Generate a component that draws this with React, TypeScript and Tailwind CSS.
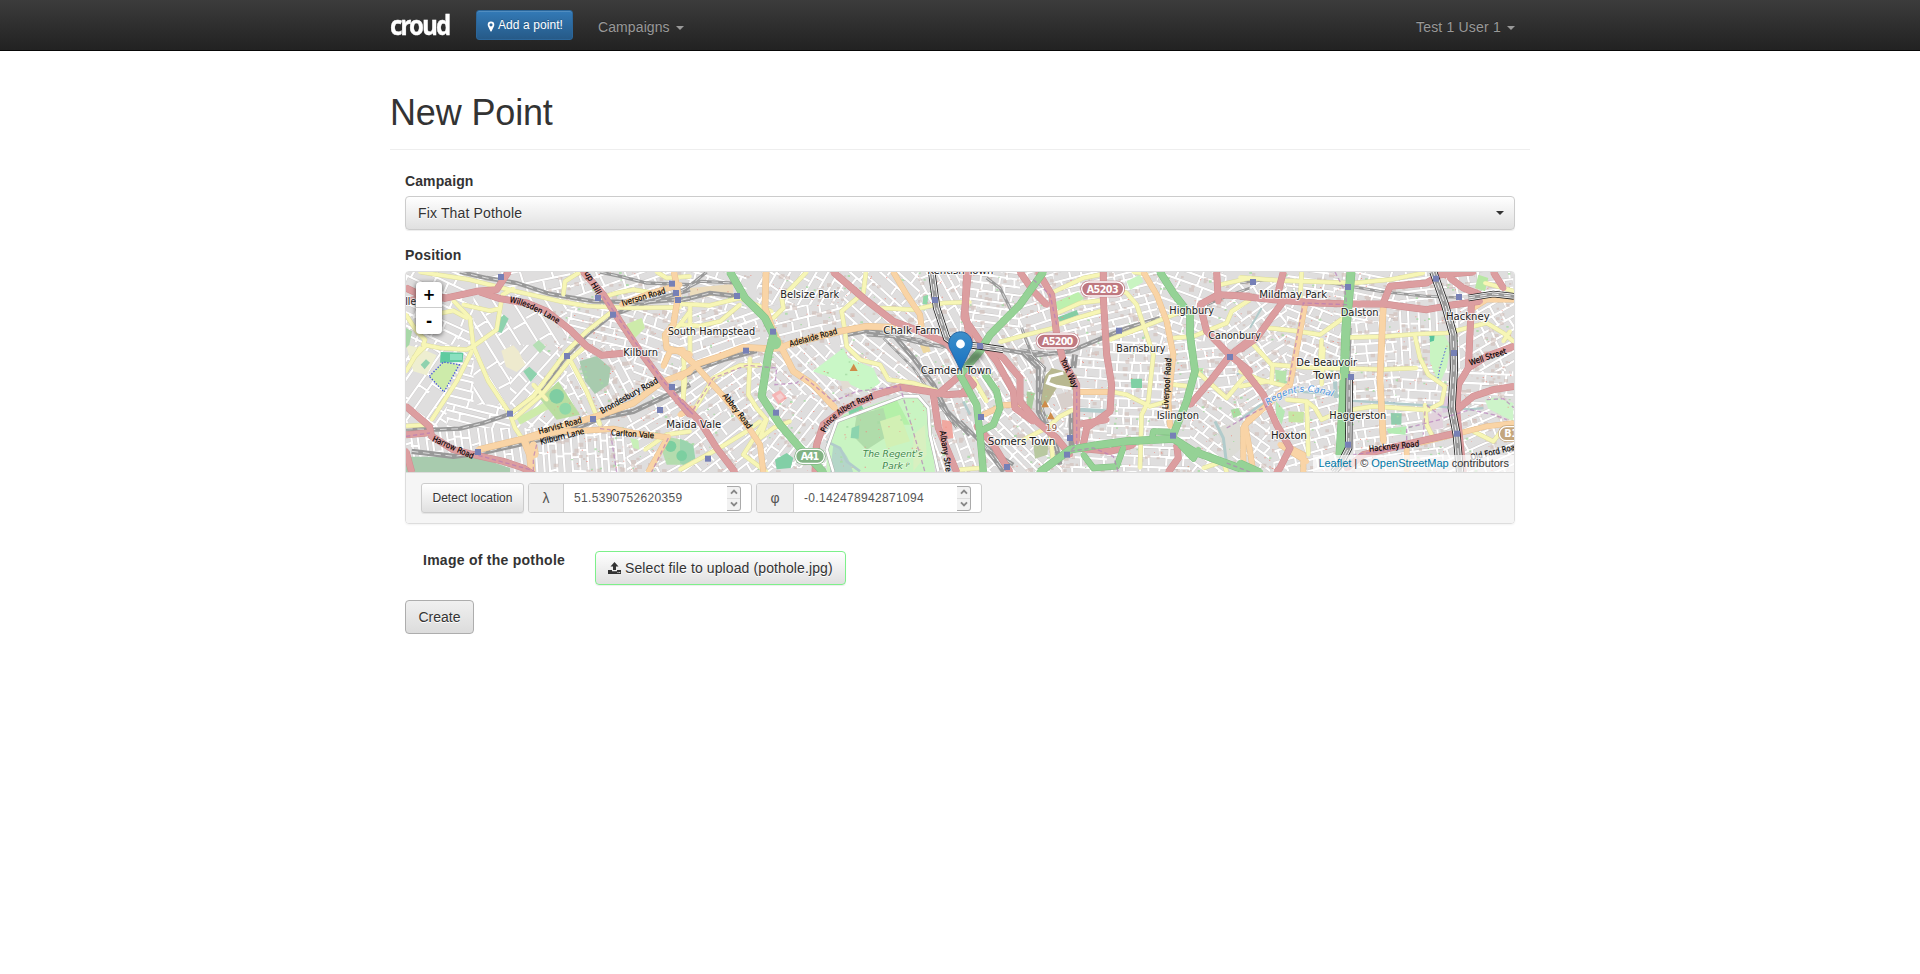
import React from "react";

type Road = [tile: number, d: string, width?: number];

const TILE = 840;
const shift = (tile: number) => `translate(${tile * TILE} 0)`;

/* ---------- minor streets ---------- */

function makeRandom(seed: number) {
  let s = seed;
  return () => {
    s = (s * 1664525 + 1013904223) % 4294967296;
    return s / 4294967296;
  };
}

// x, y, width, height, angle, row spacing, cross-street spacing
const zones: number[][] = [
  [0, 0, 240, 230, 25, 34, 60],
  [0, 230, 230, 270, -55, 40, 80],
  [140, 270, 200, 220, 14, 25, 74],
  [220, 0, 300, 110, -12, 36, 66],
  [220, 80, 300, 330, 58, 42, 100],
  [510, 0, 330, 120, -20, 32, 60],
  [500, 120, 220, 130, 14, 23, 56],
  [330, 230, 300, 260, -48, 33, 70],
  [500, 240, 320, 200, 62, 26, 58],
  [0, 480, 390, 140, 82, 22, 60],
  [390, 480, 290, 140, 86, 21, 56],
  [680, 380, 200, 240, -30, 28, 60],
  [700, 120, 150, 260, 20, 27, 60],
  [840, 0, 200, 150, 18, 27, 66],
  [840, 130, 240, 170, -20, 26, 60],
  [840, 280, 250, 190, -35, 26, 70],
  [840, 430, 300, 190, -38, 30, 74],
  [1070, 0, 300, 130, -60, 30, 70],
  [1100, 110, 240, 180, -14, 32, 64],
  [1080, 230, 240, 180, 45, 29, 62],
  [1100, 380, 190, 220, -52, 27, 60],
  [1330, 0, 280, 210, 42, 30, 66],
  [1340, 170, 350, 210, 38, 28, 64],
  [1560, 0, 150, 380, 62, 26, 58],
  [1590, 360, 140, 260, 70, 28, 64],
  [1680, 0, 190, 220, 8, 25, 54],
  [1700, 180, 200, 280, 58, 28, 60],
  [1860, 0, 160, 200, -18, 28, 52],
  [1880, 200, 160, 240, 65, 28, 60],
  [1750, 420, 270, 200, 45, 26, 58],
  [1990, 200, 220, 420, 4, 30, 50],
  [1960, 0, 320, 230, -14, 28, 54],
  [2120, 210, 270, 400, 2, 27, 42],
  [2270, 0, 210, 240, 20, 28, 52],
  [2290, 220, 250, 250, -6, 27, 46],
  [2370, 370, 240, 250, 36, 29, 54],
  [2480, 40, 200, 230, -36, 28, 50],
  [2510, 220, 180, 240, -32, 28, 58],
  [2660, 100, 190, 230, 22, 28, 54],
  [2620, 320, 220, 290, -16, 29, 50],
  [2660, 0, 180, 110, 8, 28, 50],
  [2800, 0, 200, 190, 12, 28, 52],
  [2840, 160, 160, 250, -4, 29, 44],
  [3000, 0, 340, 120, -7, 30, 50],
  [2990, 120, 280, 190, 87, 27, 78],
  [3000, 300, 340, 170, 3, 29, 50],
  [2860, 400, 300, 210, -8, 27, 48],
  [3180, 90, 180, 220, -30, 30, 56],
  [3130, 410, 230, 210, -24, 28, 52],
];

function streetPath(zone: number[], seed: number) {
  const [, , w, h, , du, dv] = zone;
  const rnd = makeRandom(seed * 7919 + 17);
  const r = Math.hypot(w, h) / 2;
  let d = "";
  for (let y = -r; y < r; y += du * (0.8 + rnd() * 0.45)) {
    const bend = (rnd() - 0.5) * 10;
    d += `M${-r} ${y.toFixed(1)}Q0 ${(y + bend).toFixed(1)} ${r} ${y.toFixed(1)}`;
    for (let x = -r + rnd() * dv; x < r; x += dv * (0.5 + rnd())) {
      d += `M${x.toFixed(1)} ${y.toFixed(1)}l${((rnd() - 0.5) * 8).toFixed(1)} ${du}`;
    }
  }
  return d;
}

function speckles(count: number, seed: number, size: number) {
  const rnd = makeRandom(seed);
  let d = "";
  for (let i = 0; i < count; i++) {
    const x = 430 + rnd() * 2900;
    const y = 12 + rnd() * 600;
    const s = size * (0.6 + rnd() * 0.8);
    d += `M${x.toFixed(0)} ${y.toFixed(0)}h${s.toFixed(0)}v${(s * 0.8).toFixed(0)}h${-s.toFixed(0)}z`;
  }
  return d;
}

const buildings = speckles(1300, 5, 11);
const redDots = speckles(900, 11, 3);
const greenDots = speckles(380, 23, 6);

/* ---------- areas ---------- */

const areas: [number, string, string][] = [
  [0, "M88 325L130 282L178 290L132 372Z", "#cdebaa"],
  [0, "M122 252L190 254L188 282L120 284Z", "#60cba0"],
  [0, "M150 258h36v18h-36z", "#8ae0c0"],
  [0, "M18 230L60 240L110 262L80 322L40 310Z", "#eeeed0"],
  [0, "M62 290L78 274L90 284L74 304Z", "#8fd2ae"],
  [0, "M290 160L312 140L326 152L305 195L290 190Z", "#8fd2ae"],
  [0, "M304 248L340 232L356 250L376 290L350 312L318 296Z", "#eeeace"],
  [0, "M370 310L388 296L412 318L392 342Z", "#8fd2ae"],
  [0, "M398 232L416 216L438 236L420 256Z", "#b5dfb5"],
  [0, "M350 450L440 400L452 420L360 470Z", "#cdebaa"],
  [0, "M420 392L475 340L540 440L470 455Z", "#b9dda0"],
  [0, "M538 280L590 264L632 300L625 350L585 378L555 340Z", "#a8cbae"],
  [0, "M680 168L725 150L735 180L705 210L680 190Z", "#cdebaa"],
  [0, "M690 510L715 515L718 545L700 540Z", "#c8f0b8"],
  [0, "M18 566L230 566L330 600L330 615L18 615Z", "#a8cbae"],
  [0, "M810 508L865 520L870 590L800 590L785 545Z", "#b4dcae"],
  [0, "M18 180L36 190L28 230L18 240Z", "#a8d8a8"],
  [1, "M0 512L40 530L46 572L10 590L0 585Z", "#9bd4ae"],
  [1, "M30 60L160 48L160 75L30 92Z", "#ecdcbc"],
  [1, "M398 310L490 240L505 270L580 300L600 345L560 372L500 345Z", "#c9f7c6"],
  [1, "M480 338L505 340L515 356L490 364Z", "#e2dcd2"],
  [1, "M275 380L300 366L322 390L296 410Z", "#f5b5b5"],
  [1, "M288 384L302 376L312 388L298 398Z", "#f4d0d0"],
  [1, "M490 440L620 395L700 380L750 420L765 615L440 615L440 530Z", "#c9f4c2"],
  [1, "M580 420L650 395L690 470L610 470Z", "#b4f0a8"],
  [1, "M530 440L610 420L630 500L560 545L520 505Z", "#b0dcaa"],
  [1, "M600 460L660 440L690 520L620 540Z", "#d2f0b4"],
  [1, "M700 500L735 470L740 560L700 610Z", "#d8f0c0"],
  [1, "M460 530Q500 540 520 615L450 615Z", "#b4d6c8"],
  [1, "M515 480L538 472L536 512L512 510Z", "#8cd4ae"],
  [1, "M505 430L545 412L550 422L508 440Z", "#80d2a6"],
  [1, "M285 575L320 555L340 570L332 600L290 604Z", "#82cfa6"],
  [1, "M730 85L745 80L742 110L728 108Z", "#90d8a8"],
  [1, "M785 455L815 460L820 510L790 516Z", "#f0a8a0"],
  [1, "M720 232L745 230L752 250L730 256Z", "#eed8a0"],
  [2, "M250 330L275 300L350 320L350 366L290 360L240 440L240 360Z", "#b8b890"],
  [2, "M280 105L355 72L372 92L300 135Z", "#bdf0ae"],
  [2, "M292 148L350 126L356 140L300 162Z", "#86cda4"],
  [2, "M500 40L540 20L550 42L510 66Z", "#c9f4c2"],
  [2, "M512 332L546 332L546 360L514 360Z", "#80d0a4"],
  [2, "M290 380L330 370L345 410L305 425Z", "#d8d0cc"],
  [2, "M220 530L265 530L262 560L225 572Z", "#b8c8a0"],
  [2, "M200 370L225 375L215 425L200 410Z", "#a8cc9c"],
  [2, "M700 300L730 300L726 330L700 325Z", "#b8ecb0"],
  [2, "M770 480L840 460L846 540L800 580Z", "#dcdcd6"],
  [2, "M812 425L835 420L845 440L820 450Z", "#a8dca0"],
  [3, "M105 305L140 310L136 348L108 345Z", "#b6e4ac"],
  [3, "M145 430L192 432L190 464L146 462Z", "#c6e6a4"],
  [3, "M108 400L135 430L125 470L108 440Z", "#b6e8b4"],
  [3, "M570 200L610 195L632 235L620 300L600 345L580 310L570 280Z", "#c9f4c2"],
  [3, "M568 202L584 200L582 218L570 222Z", "#58c49c"],
  [3, "M452 435L485 436L484 470L454 470Z", "#90ccac"],
  [3, "M440 482L500 475L496 500L445 496Z", "#b4ecb4"],
  [3, "M715 20L745 30L735 70L705 60Z", "#b8e8a4"],
  [3, "M735 395L765 388L820 405L820 460L780 440L745 422Z", "#cdf4c9"],
  [3, "M553 440L605 430L610 480L565 490Z", "#e2d2dc"],
  [3, "M605 385L632 385L632 430L608 435Z", "#dcc8de"],
  [3, "M710 60L735 90L700 95Z", "#dcc8a8"],
];

const water: Road[] = [
  [1, "M440 520L480 540L500 580L540 610", 8],
  [1, "M850 400L870 440", 8],
  [2, "M360 425L440 430", 12],
  [2, "M765 460L790 510L800 590", 9],
  [2, "M830 320L870 300", 6],
  [3, "M0 455L60 412L160 370L280 378L330 398L440 405L560 412L690 424L730 420", 7],
  [3, "M285 340L288 390", 12],
  [3, "M65 120L30 180", 6],
];

/* ---------- roads ---------- */

const yellow: Road[] = [
  [0, "M60 12L210 35L330 66L480 100L560 114L690 120L840 118"],
  [0, "M160 98L210 150L220 235L265 340L330 438L345 480L372 520"],
  [0, "M190 110L270 128L300 122L308 80L340 62"],
  [0, "M100 140L160 128L200 150M220 235L290 185L300 122"],
  [0, "M18 140L50 190L75 215L70 230L120 240L200 245L220 235"],
  [0, "M75 235L40 270M18 310L60 240"],
  [0, "M215 250L170 340L95 455"],
  [0, "M18 474L90 470"],
  [0, "M330 438L400 385L500 250L560 190L640 128"],
  [0, "M345 450L425 380L510 275L550 240"],
  [0, "M510 275L560 370L600 470"],
  [0, "M400 350L440 395"],
  [0, "M490 80L495 40L540 12M600 90L650 75L700 65L760 75"],
  [0, "M770 12L800 30L870 25M790 210L840 170L870 130"],
  [0, "M850 260L855 340L848 400"],
  [0, "M735 545L800 500L870 490"],
  [1, "M0 108L90 112L180 90L255 122L275 130"],
  [1, "M0 170L60 174L120 160L180 110"],
  [1, "M30 112L30 260"],
  [1, "M280 150L310 120L305 90L380 12"],
  [1, "M495 190L485 130L520 100L550 75L558 12"],
  [1, "M600 120L700 125L790 105L870 102"],
  [1, "M495 190L500 235L540 275L600 290L625 335L700 345L770 368"],
  [1, "M10 300L10 400M210 270L205 380L230 420L260 455L240 510L280 480L330 460"],
  [1, "M0 605L110 545L200 490L240 460M255 458L190 560L260 612"],
  [1, "M40 430L100 330L180 292L240 292"],
  [2, "M120 222L200 200L290 178"],
  [2, "M280 72L370 30L420 20"],
  [2, "M290 136L360 105L420 98"],
  [2, "M292 170L350 150L425 128"],
  [2, "M440 50L500 75L530 110L560 200L580 260L565 400L545 440L540 600"],
  [2, "M450 215L540 180L680 125"],
  [2, "M460 372L500 380L570 415L625 400"],
  [2, "M640 210L700 205L800 165L815 130L870 95"],
  [2, "M710 310L800 390L850 330L870 320"],
  [2, "M640 350L690 355"],
  [2, "M180 520L260 480L300 445L340 425"],
  [2, "M270 480L280 590M0 605L60 600"],
  [2, "M520 12L560 18M780 50L870 30"],
  [2, "M40 330L80 400M730 600L790 580L800 612"],
  [3, "M0 28L130 38L340 45L450 35L550 15"],
  [3, "M185 12L180 100"],
  [3, "M85 180L160 188L240 200L310 150"],
  [3, "M330 208L430 206L530 198L620 195L740 165"],
  [3, "M245 215L240 290M250 240L245 350"],
  [3, "M40 230L95 290L200 298L330 302L430 304L530 300"],
  [3, "M0 310L60 335L140 355M0 355L80 340"],
  [3, "M525 205L540 270L565 320L615 355L605 405L555 430"],
  [3, "M140 395L200 400L225 420L245 455L300 430L400 415L550 425"],
  [3, "M200 400L205 560M98 290L95 340"],
  [3, "M555 410L560 470L580 510M740 165L790 195L820 220M810 190L790 220"],
  [3, "M700 490L760 520L800 470M735 45L790 60L822 70"],
];

const orange: Road[] = [
  [0, "M235 545L372 512L470 480L590 445L700 405L780 345L870 310", 17],
  [0, "M375 515L480 490L550 488L640 482L700 495L800 508", 15],
  [0, "M372 515L390 560L395 612M400 530L405 560", 20],
  [0, "M805 505L745 612", 15],
  [0, "M665 110L740 80L840 50", 15],
  [0, "M822 12L835 80L820 170L795 200L800 240L870 260", 16],
  [0, "M790 295L810 250L850 245", 15],
  [1, "M0 250L45 290L120 265L190 238L265 242L300 240L330 228L480 190L560 175L640 178", 17],
  [1, "M45 290L130 385L200 470L240 530L250 612", 15],
  [1, "M258 12L255 120L280 190L300 230L340 310L400 350L465 420", 17],
  [1, "M0 440L40 420M0 330L50 290", 15],
  [1, "M640 12L680 80L720 140L725 180", 15],
  [2, "M550 12L590 80L620 160L640 260L625 400L630 475", 15],
  [2, "M350 372L450 372M70 440L130 412L180 408", 15],
  [2, "M850 612L850 480L870 450", 15],
  [3, "M195 110L150 350L60 430L15 470L30 550L40 612", 15],
  [3, "M430 110L420 330L430 520", 17],
  [3, "M150 540L190 560L190 612M120 530L200 580", 15],
  [3, "M540 525L640 500L740 475L820 465", 14],
  [3, "M700 120L740 95L822 95M500 540L500 610", 14],
];

const red: Road[] = [
  [0, "M130 92L230 70L290 65L325 12M18 60L60 80L140 90M18 100L60 92"],
  [0, "M240 72L300 92L380 105L440 130L510 185L560 235L605 262L670 256"],
  [0, "M550 12L610 80L660 160L720 250L790 345L870 440"],
  [0, "M18 415L88 475L95 505L160 545L230 562L310 580L370 600L400 620"],
  [0, "M18 550L35 612M18 500L80 495"],
  [1, "M0 400L60 460L110 540L165 612"],
  [1, "M460 12L550 90L640 160L720 190L800 225L842 280"],
  [1, "M860 12L855 130L870 220M800 225L870 220"],
  [1, "M405 612L410 530L430 470L490 425L590 380L660 358L740 370L800 380L870 375"],
  [1, "M760 380L775 480L830 612"],
  [1, "M775 378L842 320"],
  [2, "M25 12L12 150L60 220L130 270L180 330L180 400L230 460L290 510L330 560"],
  [2, "M180 12L220 70L260 110"],
  [2, "M235 12L275 80L290 200L310 280L350 350L350 520"],
  [2, "M430 12L430 90L440 260L455 350L450 430L380 480L370 530"],
  [2, "M350 470L440 455M75 235L110 280L160 370L165 420L220 460"],
  [2, "M0 300L40 350L0 380M50 475L100 530L150 612"],
  [2, "M720 110L740 190L810 262L870 310M720 110L775 80L870 85"],
  [2, "M775 100L770 12M810 262L750 340L690 410M810 262L870 215"],
  [2, "M350 540L450 550L520 530M650 530L655 570L625 612"],
  [3, "M0 85L100 95L230 105L330 108L430 108L560 125L630 112L720 100"],
  [3, "M110 95L120 50L130 12M0 245L50 210L100 140L130 100M0 290L70 380L110 470L150 540L120 600L110 612"],
  [3, "M430 105L450 55L560 45L600 20L700 12M630 30L670 60L720 80"],
  [3, "M695 90L685 300L655 350L650 430L670 612"],
  [3, "M650 425L700 385L760 365L822 355M685 300L740 265L822 235"],
  [3, "M320 600L370 560L450 540L560 515L650 495M760 12L790 60"],
];

const green: Road[] = [
  [1, "M150 12L195 90L255 150L280 200L265 260L245 385L300 470L360 540L430 612", 21],
  [2, "M250 12L180 110L90 200L60 250L0 320", 20],
  [2, "M0 320L50 410L62 520L70 612", 19],
  [2, "M75 320L110 370L120 420L100 470L60 490", 18],
  [2, "M600 12L640 75L690 140L690 200L705 310L680 400L640 500", 20],
  [2, "M240 612L330 545L420 530L500 520L640 512L700 550L870 612", 21],
  [2, "M575 520L580 490L630 492M370 560L400 600L470 595L490 540M660 530L700 572L715 545", 16],
  [3, "M333 12L318 180L310 400L300 560", 24],
  [3, "M0 585L60 612", 18],
];

const rail: Road[] = [
  [0, "M180 12L260 30L350 45L450 78L580 100L740 102L870 92", 13],
  [0, "M600 12L660 25L740 45L870 50", 10],
  [0, "M18 482L110 485L180 482L250 465L330 438L420 370L490 275L560 200L630 145L720 110L870 65", 13],
  [0, "M35 550L160 565L240 555L330 535L480 500L600 450L700 430L870 350", 16],
  [1, "M0 98L90 75L175 85", 14],
  [1, "M0 70L60 40L160 45M20 60L80 12", 9],
  [1, "M0 330L60 300L130 275L230 248", 15],
  [1, "M500 200L560 188L640 200L700 270L760 350L800 430L870 500", 15],
  [1, "M560 200L640 205L740 230L820 238", 11],
  [1, "M640 200L720 215L790 240M610 210L700 300L770 400L830 480", 7],
  [2, "M80 30L120 60L150 120L160 140", 9],
  [2, "M185 180L200 220L225 280", 9],
  [2, "M130 245L230 262L330 250L440 205L500 180L600 150", 13],
  [2, "M190 255L235 300L235 430L290 540L300 590", 15],
  [2, "M215 260L255 300L240 400L275 500M180 245L290 258", 7],
  [2, "M345 260L340 300M335 430L335 540", 18],
  [2, "M0 460L60 520L110 560L150 612M70 530L130 612M80 540L160 590", 12],
  [2, "M740 110L800 85L870 60", 8],
  [3, "M0 45L80 35L130 40M270 45L420 70L560 85L660 88", 8],
  [3, "M330 180L325 330", 10],
];

const railCased: Road[] = [
  [1, "M755 12L770 120L800 210L840 240", 17],
  [2, "M0 228L60 235L130 245", 15],
  [3, "M580 12L615 110L640 200L642 300L635 420L650 500L660 612", 19],
  [3, "M685 90L760 78L822 85", 15],
  [3, "M328 330L326 540L300 590L280 612", 17],
];

const dashed: Road[] = [
  [0, "M610 85L700 215L790 340L870 430M18 505L90 495M235 562L390 605M805 510L755 612"],
  [0, "M410 530L400 570M400 575L400 612M600 482L630 485L650 612"],
  [1, "M40 425L100 330L200 292L290 300L285 350L350 345L370 325L460 400L530 370L660 355L735 612M0 400L40 440"],
  [2, "M220 35L270 80L290 170M350 350L350 530L330 550L400 540L460 565L475 612M800 585L870 612M800 480L870 440"],
  [3, "M0 455L90 410M285 12L315 70L320 110L190 105L145 350M600 455L500 480L500 540L340 560"],
  [3, "M560 412L610 450L690 425L760 440L800 455M740 395L790 392L822 420M555 430L550 500"],
];

const stations: [number, number, number][] = [
  [0, 303, 27], [0, 594, 90], [0, 816, 47], [0, 828, 75], [0, 834, 96], [0, 639, 140],
  [0, 501, 264], [0, 330, 437], [0, 579, 453], [0, 780, 426], [0, 234, 552], [0, 816, 357],
  [1, 171, 84], [1, 279, 191], [1, 198, 248], [1, 288, 434], [1, 84, 572], [1, 765, 96],
  [2, 60, 234], [2, 63, 447], [2, 141, 597], [2, 330, 510], [2, 321, 560], [2, 477, 188],
  [2, 810, 267], [2, 639, 503], [3, 39, 42], [3, 324, 57], [3, 588, 32], [3, 657, 87],
  [3, 642, 255], [3, 333, 327], [3, 324, 530], [3, 651, 497],
];

/* ---------- labels ---------- */

// tile, text, left, baseline, width
const places: [number, string, number, number, number][] = [
  [0, "lle", 16, 112, 32],
  [0, "Kilburn", 670, 265, 104],
  [1, "South Hampstead", -37, 200, 263],
  [1, "Maida Vale", -41, 479, 165],
  [1, "Belsize Park", 301, 91, 177],
  [1, "Chalk Farm", 610, 197, 170],
  [1, "Kentish Town", 742, 17, 198],
  [1, "Camden Town", 722, 319, 212],
  [2, "Highbury", 628, 137, 134],
  [2, "Canonbury", 745, 213, 157],
  [2, "Barnsbury", 469, 251, 147],
  [2, "Islington", 590, 452, 127],
  [2, "Somers Town", 83, 530, 203],
  [3, "Mildmay Park", 58, 91, 203],
  [3, "Dalston", 302, 145, 114],
  [3, "Hackney", 618, 157, 131],
  [3, "De Beauvoir", 169, 295, 182],
  [3, "Town", 220, 334, 81],
  [3, "Haggerston", 268, 454, 171],
  [3, "Hoxton", 93, 512, 108],
];

// tile, text, start x, start y, end x, end y
const streets: [number, string, number, number, number, number][] = [
  [0, "up Hill", 553, 14, 590, 82],
  [0, "Iverson Road", 668, 114, 798, 76],
  [0, "Harvist Road", 418, 499, 547, 464],
  [0, "Kilburn Lane", 423, 530, 554, 497],
  [0, "Brondesbury Road", 606, 438, 776, 343],
  [0, "Carlton Vale", 632, 502, 762, 511],
  [0, "Harrow Road", 95, 519, 217, 573],
  [1, "Adelaide Road", 331, 236, 473, 197],
  [1, "Abbey Road", 127, 384, 204, 484],
  [1, "Albany Stre", 779, 490, 798, 612],
  [2, "York Way", 301, 275, 340, 362],
  [2, "Liverpool Road", 624, 424, 634, 270],
  [3, "Well Street", 691, 293, 801, 257],
  [3, "Hackney Road", 388, 551, 538, 535],
  [3, "Old Ford Road", 694, 577, 840, 542],
];

function Roads({ list, color, casing, width }: { list: Road[]; color: string; casing: string; width: number }) {
  return (
    <g fill="none" strokeLinejoin="round">
      {list.map(([t, d, w], i) => (
        <path key={`c${i}`} transform={shift(t)} d={d} stroke={casing} strokeWidth={(w ?? width) + 3} />
      ))}
      {list.map(([t, d, w], i) => (
        <path key={i} transform={shift(t)} d={d} stroke={color} strokeWidth={w ?? width} strokeLinecap="round" />
      ))}
    </g>
  );
}

function Shield({ x, y, w, label, color }: { x: number; y: number; w: number; label: string; color: string }) {
  return (
    <g>
      <rect x={x - w / 2} y={y - 25} width={w} height="50" rx="25" fill={color} />
      <rect x={x - w / 2 + 4} y={y - 21} width={w - 8} height="42" rx="21" fill={color} stroke="#fff" strokeWidth="4" />
      <text x={x} y={y + 11} textAnchor="middle" fontSize="29" fontWeight="bold" fill="#fff" textLength={w - 38}>
        {label}
      </text>
    </g>
  );
}

function StreetMap() {
  return (
    <svg viewBox="18 12 3324 600" className="block h-[200px] w-[1108px]" fontFamily="'DejaVu Sans', sans-serif">
      <rect x="0" y="0" width="3360" height="630" fill="#dfdede" />
      {zones.map((z, i) => {
        const [x, y, w, h, a] = z;
        return (
          <g key={i}>
            <clipPath id={`zone${i}`}>
              <rect x={x} y={y} width={w} height={h} />
            </clipPath>
            <g clipPath={`url(#zone${i})`}>
              <rect x={x} y={y} width={w} height={h} fill="#dfdede" />
              <g transform={`translate(${x + w / 2} ${y + h / 2}) rotate(${a})`}>
                <path d={streetPath(z, i + 1)} stroke="#c9c6c6" strokeWidth="8.5" fill="none" />
                <path d={streetPath(z, i + 1)} stroke="#fff" strokeWidth="6.5" fill="none" />
              </g>
            </g>
          </g>
        );
      })}
      <path d={buildings} fill="#cdb9b3" fillOpacity="0.55" />
      {areas.map(([t, d, c], i) => (
        <path key={i} transform={shift(t)} d={d} fill={c} />
      ))}
      <path d={greenDots} fill="#a6dba2" fillOpacity="0.8" />
      <path d={redDots} fill="#ee8f84" fillOpacity="0.85" />
      <g transform={shift(0)} fill="#8fd8a8">
        <circle cx="470" cy="385" r="22" fill="#7fcda2" />
        <circle cx="496" cy="422" r="18" />
        <circle cx="812" cy="535" r="17" fill="#7ccfa0" />
        <circle cx="845" cy="563" r="16" fill="#7ccfa0" />
      </g>
      <path transform={shift(0)} d="M88 325L130 282L178 290L132 372Z" fill="none" stroke="#4455d8" strokeWidth="4" strokeDasharray="4 5" />
      <path transform={shift(3)} d="M618 240L600 300L592 340M400 401L465 404" fill="none" stroke="#3f55e0" strokeWidth="3" strokeDasharray="4 6" />
      {water.map(([t, d, w], i) => (
        <path key={i} transform={shift(t)} d={d} fill="none" stroke="#b1cbcb" strokeWidth={w} />
      ))}
      <path transform={shift(1)} d="M440 545L470 460L590 415L670 385L715 385L745 420L750 500L775 610M440 545L460 612" fill="none" stroke="#aaa" strokeWidth="11" />
      <path transform={shift(1)} d="M440 545L470 460L590 415L670 385L715 385L745 420L750 500L775 610M440 545L460 612" fill="none" stroke="#fff" strokeWidth="8" />
      <path transform={shift(2)} d="M310 315L270 325L262 345L290 355L335 362" fill="none" stroke="#fff" strokeWidth="9" />

      <g fill="none">
        {rail.map(([t, d, w], i) => (
          <path key={i} transform={shift(t)} d={d} stroke="#999" strokeWidth={w} />
        ))}
        {rail.map(([t, d], i) => (
          <path key={i} transform={shift(t)} d={d} stroke="#e8e8e8" strokeWidth="2.5" strokeDasharray="20 14" />
        ))}
      </g>
      <Roads list={yellow} color="#f7f6b6" casing="#dcdc9e" width={11} />
      <Roads list={orange} color="#f9d4a6" casing="#e8c190" width={15} />
      <Roads list={red} color="#dc9ea0" casing="#cf8d90" width={18} />
      <Roads list={green} color="#95d296" casing="#80c082" width={20} />
      <circle cx={840 + 284} cy="224" r="20" fill="#95d296" />
      <g fill="none">
        {railCased.map(([t, d, w], i) => (
          <g key={i} transform={shift(t)}>
            <path d={d} stroke="#222" strokeWidth={(w ?? 14) + 5} />
            <path d={d} stroke="#fff" strokeWidth={w} />
            <path d={d} stroke="#999" strokeWidth={(w ?? 14) - 5} />
            <path d={d} stroke="#fff" strokeWidth="2.5" strokeDasharray="20 16" />
          </g>
        ))}
        {dashed.map(([t, d], i) => (
          <path key={i} transform={shift(t)} d={d} stroke="#b478b8" strokeOpacity="0.65" strokeWidth="4" strokeDasharray="13 8" />
        ))}
      </g>
      <g fill="#7680b6">
        {stations.map(([t, x, y], i) => (
          <rect key={i} x={t * TILE + x - 9} y={y - 9} width="18" height="18" />
        ))}
      </g>
      <g fill="#cf8b48">
        <path transform={shift(1)} d="M521 287L533 309H509Z" />
        <path transform={shift(2)} d="M255 397L267 418H244ZM272 432L284 454H261Z" />
      </g>

      <g fontSize="25" fill="#000" stroke="#000" strokeWidth="0.5">
        {streets.map(([t, s, x1, y1, x2, y2], i) => {
          const angle = (Math.atan2(y2 - y1, x2 - x1) * 180) / Math.PI;
          return (
            <text
              key={i}
              transform={`translate(${t * TILE + x1} ${y1}) rotate(${angle})`}
              textLength={Math.hypot(x2 - x1, y2 - y1)}
              lengthAdjust="spacingAndGlyphs"
            >
              {s}
            </text>
          );
        })}
        <path id="willesden" d="M328 102Q385 112 480 172" fill="none" stroke="none" />
        <text fontSize="24">
          <textPath href="#willesden" textLength="160" lengthAdjust="spacingAndGlyphs">Willesden Lane</textPath>
        </text>
        <path id="albert" d="M1276 494Q1302 430 1424 391" fill="none" stroke="none" />
        <text fontSize="24">
          <textPath href="#albert" textLength="182" lengthAdjust="spacingAndGlyphs">Prince Albert Road</textPath>
        </text>
      </g>
      <path id="canal" d="M2604 413Q2690 345 2800 388" fill="none" />
      <text fontSize="27" fontStyle="italic" fill="#4a8fdc" stroke="#fff" strokeOpacity="0.8" strokeWidth="4" paintOrder="stroke">
        <textPath href="#canal" textLength="205">Regent's Canal</textPath>
      </text>
      <g fontSize="27" fontStyle="italic" fill="#3f8a4a" stroke="#e4f8e0" strokeWidth="4" paintOrder="stroke">
        <text x={840 + 548} y="566" textLength="180" lengthAdjust="spacingAndGlyphs">The Regent's</text>
        <text x={840 + 607} y="602" textLength="62" lengthAdjust="spacingAndGlyphs">Park</text>
        <text x={840 + 677} y="596" fontSize="18">P</text>
      </g>
      <text x={1680 + 257} y="488" fontSize="27" fill="#8a5a44" stroke="#fff" strokeWidth="4" paintOrder="stroke">19</text>
      <g fontSize="30" fill="#222" stroke="#fff" strokeOpacity="0.75" strokeWidth="6" strokeLinejoin="round" paintOrder="stroke">
        {places.map(([t, s, x, y, w], i) => (
          <text key={i} x={t * TILE + x} y={y} textLength={w} lengthAdjust="spacingAndGlyphs">
            {s}
          </text>
        ))}
      </g>
      <Shield x={840 + 390} y={565} w={94} label="A41" color="#82b384" />
      <Shield x={1680 + 428} y={63} w={134} label="A5203" color="#bf7880" />
      <Shield x={1680 + 293} y={219} w={132} label="A5200" color="#bf7880" />
      <Shield x={2520 + 832} y={497} w={116} label="B118" color="#c4a67c" />
    </svg>
  );
}

/* ---------- page ---------- */

function Caret({ className = "" }: { className?: string }) {
  return <span className={`inline-block border-x-4 border-t-4 border-x-transparent align-middle ${className}`} />;
}

const button =
  "border bg-gradient-to-b from-white to-[#e0e0e0] text-[#333] shadow-[inset_0_1px_0_rgba(255,255,255,0.15),0_1px_1px_rgba(0,0,0,0.075)] [text-shadow:0_1px_0_#fff]";

function Marker() {
  return (
    <svg viewBox="0 0 50 41" className="absolute top-[59px] left-[542px] h-[41px] w-[50px]">
      <defs>
        <linearGradient id="pin" x1="0" y1="0" x2="0" y2="1">
          <stop offset="0" stopColor="#3c8fcb" />
          <stop offset="1" stopColor="#1870c0" />
        </linearGradient>
        <filter id="soft" x="-50%" y="-50%" width="200%" height="200%">
          <feGaussianBlur stdDeviation="2" />
        </filter>
      </defs>
      <path d="M13 38L22 23C28 18 37 21 35 26C33 31 20 34 13 38Z" fill="#000" fillOpacity="0.35" filter="url(#soft)" />
      <path
        d="M12.5 .8C6 .8 .8 6 .8 12.5c0 3 1 5.200 2.500 7.700L12.500 39.500L21.700 20.200c1.500-2.500 2.500-4.700 2.500-7.700C24.200 6 19 .8 12.500 .8Z"
        fill="url(#pin)"
        stroke="#2a69a5"
        strokeWidth="1"
      />
      <circle cx="12.500" cy="13" r="4.400" fill="#fff" />
    </svg>
  );
}

function Spinner() {
  return (
    <span className="flex h-[25px] w-[14px] flex-col rounded-r-[3px] border border-l-0 border-[#aaa] bg-[#f2f2f2]">
      <span className="flex h-3 items-center justify-center border-b border-[#ddd]">
        <svg viewBox="0 0 8 6" className="h-[6px] w-2">
          <path d="M1 4.700L4 1.700L7 4.700" fill="none" stroke="#888" strokeWidth="1.900" />
        </svg>
      </span>
      <span className="flex flex-1 items-center justify-center">
        <svg viewBox="0 0 8 6" className="h-[6px] w-2">
          <path d="M1 1.300L4 4.300L7 1.300" fill="none" stroke="#888" strokeWidth="1.900" />
        </svg>
      </span>
    </span>
  );
}

function Coordinate({ symbol, value, addon, field }: { symbol: string; value: string; addon: string; field: string }) {
  return (
    <div className="flex h-[30px] overflow-hidden rounded-[3px] border border-[#ccc] bg-white">
      <span className={`flex items-center justify-center border-r border-[#ccc] bg-[#eee] text-sm text-[#555] ${addon}`}>{symbol}</span>
      <span className={`flex items-center justify-between pr-[10px] pl-[10px] text-xs tracking-[0.32px] text-[#555] ${field}`}>
        <span>{value}</span>
        <Spinner />
      </span>
    </div>
  );
}

export default function App() {
  return (
    <div className="min-h-[974px] bg-white font-['Liberation_Sans',Arial,sans-serif] text-sm leading-5 text-[#333]">
      <nav className="h-[51px] border-b border-[#080808] bg-gradient-to-b from-[#3c3c3c] to-[#222]">
        <div className="mx-auto flex h-[50px] w-[1140px] items-start text-[#999]">
          <span className="mt-[11px] w-[86px] origin-left scale-x-[0.92] font-['Noto_Sans',sans-serif] text-[26px] leading-[28px] font-bold tracking-[-1.9px] text-white [-webkit-text-stroke:0.4px_#fff]">
            croud
          </span>
          <button className="mt-[10px] flex h-[30px] w-[97px] items-center rounded-[3px] border border-[#2b669a] bg-gradient-to-b from-[#337ab7] to-[#265a88] pl-[10px] text-xs leading-[18px] tracking-[0.08px] text-white shadow-[inset_0_1px_0_rgba(255,255,255,0.15)] [text-shadow:0_-1px_0_rgba(0,0,0,0.2)]">
            <svg viewBox="0 0 8 12" className="mt-[2px] mr-[3px] h-[11px] w-[8px]">
              <path fillRule="evenodd" d="M4 .5A3.600 3.600 0 0 0 .4 4.200C.4 5 .7 5.700 1 6.300L3.400 11.200Q4 12 4.600 11.200L7 6.300C7.300 5.700 7.600 5 7.600 4.200A3.600 3.600 0 0 0 4 .5ZM4 2.500a1.700 1.700 0 1 1 0 3.400a1.700 1.700 0 0 1 0-3.400Z" fill="#fff" />
            </svg>
            Add a point!
          </button>
          <span className="mt-[17px] ml-[25px] tracking-[0.1px] [text-shadow:0_-1px_0_rgba(0,0,0,0.25)]">
            Campaigns <Caret className="ml-[2px]" />
          </span>
          <span className="mt-[17px] mr-[15px] ml-auto tracking-[0.19px] [text-shadow:0_-1px_0_rgba(0,0,0,0.25)]">
            Test 1 User 1 <Caret className="ml-[2px]" />
          </span>
        </div>
      </nav>

      <main className="mx-auto w-[1140px] pt-[40px]">
        <h1 className="h-[59px] border-b border-[#eee] text-4xl leading-[43px] font-normal tracking-[-0.15px]">New Point</h1>
        <div className="px-[15px] pt-[21px]">
          <div className="mb-[5px] font-bold tracking-[0.1px]">Campaign</div>
          <button className={`flex h-[34px] w-full items-center justify-between rounded-[4px] border-[#ccc] px-3 tracking-[0.15px] ${button}`}>
            Fix That Pothole
            <Caret className="-mr-[2px]" />
          </button>
          <div className="mt-[15px] mb-[6px] font-bold tracking-[0.15px]">Position</div>

          <section className="overflow-hidden rounded-[4px] border border-[#ddd] shadow-[0_1px_2px_rgba(0,0,0,0.05)]">
            <div className="relative h-[200px] overflow-hidden">
              <StreetMap />
              <Marker />
              <div className="absolute top-[10px] left-[10px] w-[26px] overflow-visible rounded-[4px] bg-white text-center font-['DejaVu_Sans',sans-serif] text-[15px] leading-[26px] font-bold text-black shadow-[0_1px_5px_rgba(0,0,0,0.65)]">
                <div className="h-[26px] border-b border-[#ccc]">+</div>
                <div className="h-[26px]">-</div>
              </div>
              <div className="absolute right-0 bottom-0 bg-white/70 px-[5px] text-[11px] leading-[17px] tracking-[-0.02px] whitespace-nowrap">
                <span className="text-[#0078A8]">Leaflet</span> | © <span className="text-[#0078A8]">OpenStreetMap</span> contributors
              </div>
            </div>
            <div className="flex h-[51px] gap-1 border-t border-[#ddd] bg-[#f5f5f5] px-[15px] pt-[10px]">
              <button className={`h-[30px] w-[103px] rounded-[3px] border-[#ccc] text-xs tracking-[0.05px] ${button}`}>Detect location</button>
              <Coordinate symbol="λ" value="51.5390752620359" addon="w-[35px]" field="w-[187px]" />
              <Coordinate symbol="φ" value="-0.142478942871094" addon="w-[37px]" field="w-[187px]" />
            </div>
          </section>

          <div className="mt-[27px] flex pl-[18px]">
            <span className="-mt-px w-[172px] font-bold tracking-[0.26px]">Image of the pothole</span>
            <button className={`flex h-[34px] w-[251px] items-center rounded-[4px] border-[#7df08a] pl-3 tracking-[0.11px] whitespace-nowrap ${button}`}>
              <svg viewBox="0 0 13 12" className="mr-1 h-3 w-[13px]">
                <path d="M6.500 0L10.500 4.400H8V8H5V4.400H2.500Z" fill="#333" />
                <path d="M0 8H4V9.200H9V8H13V12H0Z" fill="#333" />
                <path d="M9.500 10h1v1h-1zM11.200 10h1v1h-1z" fill="#eee" />
              </svg>
              Select file to upload (pothole.jpg)
            </button>
          </div>
          <button className="mt-[15px] h-[34px] w-[69px] rounded-[4px] border border-[#adadad] bg-gradient-to-b from-[#f0f0f0] to-[#dcdcdc] text-[#333] [text-shadow:0_1px_0_#fff]">
            Create
          </button>
        </div>
      </main>
    </div>
  );
}
